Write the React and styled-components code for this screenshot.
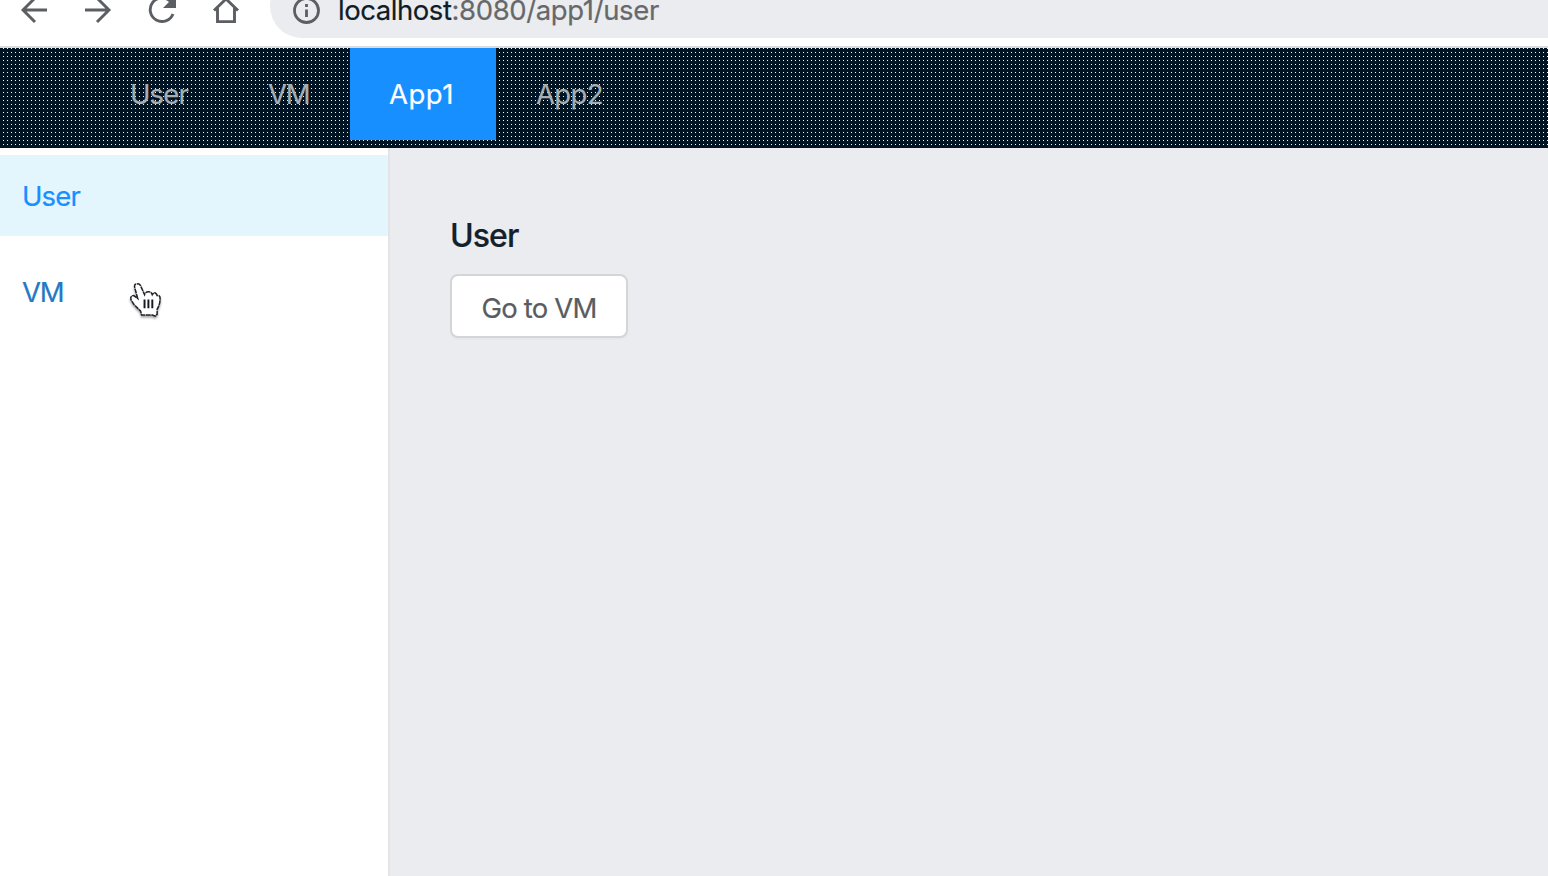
import React from 'react';
import styled, { createGlobalStyle } from 'styled-components';

const GlobalStyle = createGlobalStyle`
  * { box-sizing: border-box; }
  body { margin: 0; background: #ebecef; font-family: Inter, 'Liberation Sans', sans-serif; font-size: 27.5px; -webkit-text-stroke: 0.2px; }
`;

const Window = styled.div`
  height: 876px;
  display: flex;
  flex-direction: column;
  overflow: hidden;
`;

const Toolbar = styled.div`
  height: 48px;
  flex: none;
  display: flex;
  align-items: flex-start;
  background: #fff;
  border-bottom: 2px solid #dadcdd;
  overflow: hidden;
`;

const NavIcons = styled.svg`
  width: 270px;
  height: 46px;
  flex: none;
  fill: none;
  stroke: #5b5e62;
  stroke-width: 2.9;
`;

const AddressBar = styled.div`
  flex: 1;
  height: 64px;
  margin-top: -26px;
  padding: 26px 0 0 23px;
  display: flex;
  align-items: flex-start;
  border-radius: 32px 0 0 32px;
  background: #ebecef;
`;

const InfoIcon = styled.svg`
  width: 28px;
  height: 26px;
  flex: none;
  margin-right: 17px;
  fill: none;
  stroke: #5b5e62;
  stroke-width: 2.8;
`;

const Address = styled.div`
  display: flex;
  line-height: 32px;
  margin-top: -6px;
  color: #66686b;
  white-space: nowrap;
`;

const Host = styled.span`
  color: #101c27;
  letter-spacing: ${(p) => p.$spacing};
`;

const Path = styled.span`
  letter-spacing: ${(p) => p.$spacing};
`;

const Header = styled.nav`
  height: 100px;
  flex: none;
  display: flex;
  padding-left: 90px;
  background-image:
    linear-gradient(90deg, #001424 3px, transparent 3px),
    linear-gradient(#001424 3px, #f4fbff 3px);
  background-size: 4px 4px;
  background-position: 0 1px;
`;

const Tab = styled.a`
  width: ${(p) => p.$width};
  height: 92px;
  padding-left: ${(p) => (p.$active ? '39px' : '40px')};
  line-height: 92px;
  letter-spacing: ${(p) => p.$spacing};
  color: ${(p) => (p.$active ? '#fff' : '#a8adb3')};
  background: ${(p) => (p.$active ? '#188fff' : 'transparent')};
  white-space: nowrap;
`;

const Body = styled.div`
  flex: 1;
  display: flex;
`;

const Sidebar = styled.aside`
  width: 390px;
  flex: none;
  padding-top: 7px;
  display: flex;
  flex-direction: column;
  gap: 15px;
  background: #fff;
  border-right: 2px solid #e2e4e6;
`;

const SideItem = styled.a`
  height: 81px;
  padding-left: 22px;
  line-height: 82px;
  letter-spacing: ${(p) => p.$spacing};
  color: ${(p) => (p.$active ? '#188fff' : '#2478c4')};
  background: ${(p) => (p.$active ? '#e3f5fd' : 'transparent')};
`;

const Content = styled.main`
  flex: 1;
  padding: 68px 60px;
  background: #ebecef;
`;

const Title = styled.h1`
  margin: 0 0 18px;
  font-size: 32px;
  line-height: 40px;
  font-weight: 500;
  letter-spacing: -0.9px;
  color: #14202a;
`;

const Button = styled.button`
  width: 178px;
  height: 64px;
  padding: 3px 0 0;
  border: 2px solid #d3d5d7;
  border-radius: 8px;
  background: #fff;
  box-shadow: 0 2px 1px rgba(0, 0, 0, 0.02);
  color: #595c60;
  font: inherit;
  letter-spacing: -0.82px;
`;

const Cursor = styled.svg`
  position: absolute;
  left: 128px;
  top: 281px;
  width: 35px;
  height: 38px;
  filter: drop-shadow(0 2px 1px rgba(0, 0, 0, 0.35));
`;

const tabs = [
  { label: 'User', width: '138px', spacing: '-0.85px' },
  { label: 'VM', width: '122px', spacing: '-1.3px' },
  { label: 'App1', width: '146px', spacing: '0.5px', active: true },
  { label: 'App2', width: '146px', spacing: '-0.6px' },
];

export default function App() {
  return (
    <Window>
      <GlobalStyle />
      <Toolbar>
        <NavIcons viewBox="0 0 270 46">
          <path d="M47 10H23M35-2 23 10l12 12" />
          <path d="M85 10h24M97-2l12 12-12 12" />
          <path d="M173 14A11.8 11.8 0 1 1 170.5 1.5" />
          <path d="M176-5V8H163Z" fill="#5b5e62" stroke="none" />
          <path d="M214 10.5 226-1l12 11.5M217.500 8v13.600h17V8" />
        </NavIcons>
        <AddressBar>
          <InfoIcon viewBox="0 0 28 26">
            <circle cx="13.500" cy="10.500" r="12" />
            <path d="M13.500 4v3M13.500 9.500v7.500" />
          </InfoIcon>
          <Address>
            <Host $spacing="-0.45px">localhost</Host>
            <Path $spacing="-0.37px">:8080/app1/user</Path>
          </Address>
        </AddressBar>
      </Toolbar>
      <Header>
        {tabs.map((t) => (
          <Tab key={t.label} $width={t.width} $spacing={t.spacing} $active={t.active}>
            {t.label}
          </Tab>
        ))}
      </Header>
      <Body>
        <Sidebar>
          <SideItem $active $spacing="-0.85px">User</SideItem>
          <SideItem $spacing="-1.3px">VM</SideItem>
        </Sidebar>
        <Content>
          <Title>User</Title>
          <Button>Go to VM</Button>
        </Content>
      </Body>
      <Cursor viewBox="0 0 36 39">
        <path
          d="M10 18 7 7Q6 3 9 3q3-1 4 2l4 9q1-3 4-3 3 0 4 3 2-3 4-1l1 2q3-1 3 3 0 6-3 11v5l-2 2-3-1H14l-1-4-7-7-3-5q-1-4 3-4Z"
          fill="#fff"
          stroke="#20252a"
          strokeWidth="1.600"
          strokeDasharray="5 .6"
        />
        <path d="M17 19v9M21 19v9M25 19v9" stroke="#111a20" strokeWidth="2" />
      </Cursor>
    </Window>
  );
}
